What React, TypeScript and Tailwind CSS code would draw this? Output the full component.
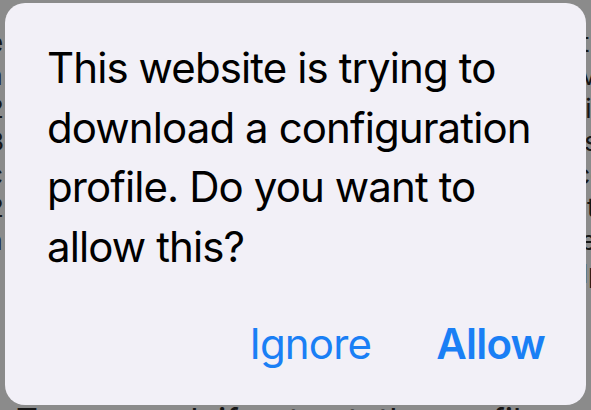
import React from "react";

export default function App() {
  const bgLines = [
    "e ipsum dolor sit amet consectetur adipiscing elit sed",
    "a configuration profile will be installed on this device",
    "2 lorem ipsum dolor sit amet consectetur adipiscing ele",
    "3 magna aliqua ut enim ad minim veniam quis nostrud",
    "c ullamco laboris nisi ut aliquip ex ea commodo conse",
    "2 duis aute irure dolor in reprehenderit in voluptate l",
    "a velit esse cillum dolore eu fugiat nulla pariatur exc",
    "r sint occaecat cupidatat non proident sunt in culpa",
  ];
  return (
    <div
      className="relative w-[591px] h-[410px] overflow-hidden bg-[#8b8b8b]"
      style={{ fontFamily: "Inter, 'Liberation Sans', sans-serif" }}
    >
      <div className="ml-[-12px] pt-[26px] text-[26px] leading-[33px] text-[#161616] whitespace-nowrap">
        {bgLines.map((l, i) => (
          <div key={i}>{l}</div>
        ))}
        <div className="pl-[28px] pt-[114px] text-[34px] leading-[33px]">To proceed, if not yet, the profile</div>
      </div>
      <div className="absolute left-[5px] top-[3px] w-[581px] h-[402px] rounded-[20px] bg-[#f2f0f7] flex flex-col">
        <p className="pl-[42px] pr-[20px] pt-[35px] text-[42px] leading-[59.5px] text-black tracking-[-0.9px] whitespace-nowrap">
          This website is trying to
          <br />
          download a configuration
          <br />
          profile. Do you want to
          <br />
          allow this?
        </p>
        <div className="mt-auto mb-[35px] flex justify-end items-center gap-[65px] pr-[41px] text-[42px] leading-[52px] tracking-[-0.8px] text-[#1a7ff5]">
          <span className="font-normal">Ignore</span>
          <span className="font-semibold">Allow</span>
        </div>
      </div>
    </div>
  );
}
